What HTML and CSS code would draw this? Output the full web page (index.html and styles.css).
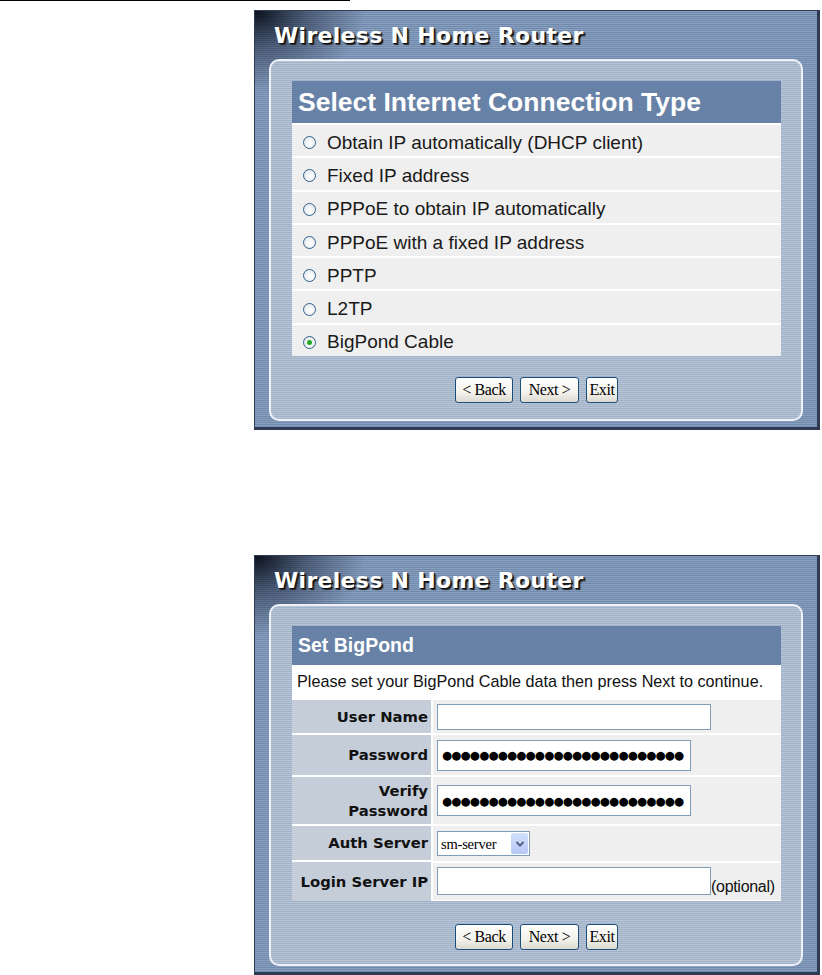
FILE: index.html
```html
<!DOCTYPE html>
<html lang="en">
<head>
    <meta charset="UTF-8">
    <meta name="viewport" content="width=device-width, initial-scale=1.0">
    <title>Wireless N Home Router - Setup Wizard</title>
    <link rel="stylesheet" href="styles.css">
</head>
<body>
    <div class="rule"></div>

    <!-- Step: connection type -->
    <div class="panel panel-first">
        <div class="brand">Wireless N Home Router</div>
        <div class="inner">
            <div class="sheet">
                <div class="sheet-title">Select Internet Connection Type</div>
                <label class="opt"><input type="radio" name="wan">Obtain IP automatically (DHCP client)</label>
                <label class="opt"><input type="radio" name="wan">Fixed IP address</label>
                <label class="opt"><input type="radio" name="wan">PPPoE to obtain IP automatically</label>
                <label class="opt"><input type="radio" name="wan">PPPoE with a fixed IP address</label>
                <label class="opt"><input type="radio" name="wan">PPTP</label>
                <label class="opt"><input type="radio" name="wan">L2TP</label>
                <label class="opt"><input type="radio" name="wan" checked>BigPond Cable</label>
            </div>
            <div class="actions">
                <button class="btn btn-back">&lt; Back</button>
                <button class="btn btn-next">Next &gt;</button>
                <button class="btn btn-exit">Exit</button>
            </div>
        </div>
    </div>

    <!-- Step: BigPond settings -->
    <div class="panel panel-second">
        <div class="brand">Wireless N Home Router</div>
        <div class="inner">
            <div class="sheet">
                <div class="sheet-title small">Set BigPond</div>
                <div class="intro">Please set your BigPond Cable data then press Next to continue.</div>
                <table class="form">
                    <tr class="row-user">
                        <th>User Name</th>
                        <td><input class="field field-long" type="text"></td>
                    </tr>
                    <tr class="row-pass">
                        <th>Password</th>
                        <td><input class="field field-pass" type="text" value="●●●●●●●●●●●●●●●●●●●●●●●●●●" readonly></td>
                    </tr>
                    <tr class="row-verify">
                        <th>Verify<br>Password</th>
                        <td><input class="field field-pass" type="text" value="●●●●●●●●●●●●●●●●●●●●●●●●●●" readonly></td>
                    </tr>
                    <tr class="row-auth">
                        <th>Auth Server</th>
                        <td>
                            <span class="select">
                                <select>
                                    <option>sm-server</option>
                                </select>
                                <span class="select-arrow">
                                    <svg width="10" height="8" viewBox="0 0 10 8"><path d="M1.5 2 L5 5.5 L8.5 2" fill="none" stroke="#4d6185" stroke-width="2"/></svg>
                                </span>
                            </span>
                        </td>
                    </tr>
                    <tr class="row-login">
                        <th>Login Server IP</th>
                        <td class="with-note"><input class="field field-long field-tall" type="text"><span class="note">(optional)</span></td>
                    </tr>
                </table>
            </div>
            <div class="actions actions-low">
                <button class="btn btn-back">&lt; Back</button>
                <button class="btn btn-next">Next &gt;</button>
                <button class="btn btn-exit">Exit</button>
            </div>
        </div>
    </div>
</body>
</html>
```

FILE: styles.css
```css
/* General */
body {
    margin: 0;
    background: #fff;
    font-family: "Liberation Sans", Arial, sans-serif;
    color: #000;
}

.rule {
    width: 350px;
    height: 1px;
    background: #000;
}

/* Router panel */
.panel {
    box-sizing: border-box;
    width: 566px;
    height: 420px;
    margin-left: 254px;
    display: flex;
    flex-direction: column;
    border: 1px solid #2e3b52;
    border-right-width: 3px;
    border-bottom-width: 3px;
    background:
        radial-gradient(ellipse 110px 80px at 0 0, rgba(5, 10, 20, 0.95), rgba(20, 30, 50, 0.5) 45%, rgba(0, 0, 0, 0) 100%),
        repeating-linear-gradient(to bottom, #8aa0bf 0, #8aa0bf 1px, #7189ac 1px, #7189ac 2px);
}

.panel-first {
    margin-top: 9px;
}

.panel-second {
    margin-top: 125px;
}

.brand {
    height: 48px;
    padding-left: 19px;
    display: flex;
    align-items: center;
    font-family: "DejaVu Sans", sans-serif;
    font-weight: bold;
    font-size: 22px;
    letter-spacing: 0.3px;
    color: #fff;
    text-shadow: 1px 1px 0 #111, 2px 2px 1px #222;
}

.inner {
    flex: 1;
    display: flex;
    flex-direction: column;
    margin: 0 14px 6px 14px;
    padding: 20px 20px 0 21px;
    border: 2px solid #eef2f8;
    border-radius: 10px;
    background: repeating-linear-gradient(to bottom, #b8c5d7 0, #b8c5d7 1px, #a0b1c8 1px, #a0b1c8 2px);
}

/* Content sheet */
.sheet {
    background: #fff;
}

.sheet-title {
    height: 42px;
    padding-left: 6px;
    display: flex;
    align-items: center;
    background: #6882a7;
    color: #fff;
    font-size: 26.5px;
    font-weight: bold;
}

.sheet-title.small {
    height: 39px;
    font-size: 19.5px;
}

.opt {
    height: 27.3px;
    margin-top: 2px;
    padding: 4px 0 0 11px;
    display: flex;
    align-items: center;
    background: #efefef;
    font-size: 19px;
    color: #1a1a1a;
}

.opt input {
    appearance: none;
    width: 13px;
    height: 13px;
    margin: 0 11px 0 0;
    border: 1px solid #2c5f8c;
    border-radius: 50%;
    background: radial-gradient(circle at 60% 60%, #fff, #dfe3e8);
    display: grid;
    place-items: center;
}

.opt input:checked::after {
    content: "";
    width: 5px;
    height: 5px;
    border-radius: 50%;
    background: #25a825;
}

/* Buttons */
.actions {
    flex: 1;
    display: flex;
    justify-content: center;
    align-items: flex-start;
    gap: 7px;
    padding-top: 21px;
}

.actions-low {
    padding-top: 23px;
}

.btn {
    height: 26px;
    padding: 0;
    border: 1px solid #1d4f7d;
    border-radius: 3px;
    background: linear-gradient(to bottom, #ffffff, #f3f2ec 60%, #dcdad0);
    font-family: "Liberation Serif", serif;
    font-size: 16px;
    letter-spacing: -0.4px;
    color: #000;
}

.btn-back {
    width: 58px;
}

.btn-next {
    width: 59px;
}

.btn-exit {
    width: 32px;
}

/* BigPond form */
.intro {
    height: 33px;
    padding-left: 5px;
    display: flex;
    align-items: center;
    font-size: 16.2px;
    color: #111;
}

.form {
    width: 100%;
    border-collapse: collapse;
}

.form th,
.form td {
    border-top: 2px solid #fff;
    padding: 0;
}

.form th {
    width: 136px;
    padding-right: 3px;
    border-right: 2px solid #fff;
    background: #c5cdd9;
    text-align: right;
    font-family: "DejaVu Sans", sans-serif;
    font-size: 14.8px;
    font-weight: bold;
    line-height: 20px;
    color: #111;
}

.form td {
    padding-left: 4px;
    background: #efefef;
}

.row-user th,
.row-user td {
    height: 33px;
}

.row-pass th,
.row-pass td {
    height: 40px;
}

.row-verify th,
.row-verify td {
    height: 47px;
}

.row-auth th,
.row-auth td {
    height: 34px;
}

.row-login th,
.row-login td {
    height: 39px;
}

.field {
    box-sizing: border-box;
    display: block;
    height: 26px;
    padding: 0 4px;
    border: 1px solid #7f9db9;
    background: #fff;
    outline: none;
}

.field-long {
    width: 274px;
}

.field-tall {
    height: 28px;
}

.field-pass {
    width: 254px;
    height: 31px;
    font-family: "DejaVu Sans", sans-serif;
    font-size: 11.5px;
    letter-spacing: -0.75px;
    color: #000;
}

.with-note {
    display: flex;
    align-items: flex-end;
}

.row-login td.with-note {
    box-sizing: border-box;
    padding-bottom: 5px;
}

.note {
    font-size: 16px;
    letter-spacing: -0.3px;
    color: #111;
    line-height: 17px;
}

/* Select box */
.select {
    display: inline-flex;
    align-items: center;
    height: 25px;
    width: 93px;
    box-sizing: border-box;
    border: 1px solid #7f9db9;
    background: #fff;
    vertical-align: middle;
}

.select select {
    appearance: none;
    flex: 1;
    min-width: 0;
    border: none;
    background: transparent;
    padding: 0 0 0 3px;
    font-family: "Liberation Serif", serif;
    font-size: 14.5px;
    letter-spacing: -0.2px;
    color: #000;
    outline: none;
}

.select-arrow {
    width: 17px;
    height: 21px;
    margin-right: 1px;
    display: flex;
    align-items: center;
    justify-content: center;
    background: linear-gradient(to bottom, #d4e0fb, #b5c8f5);
    border-radius: 2px;
}
```
